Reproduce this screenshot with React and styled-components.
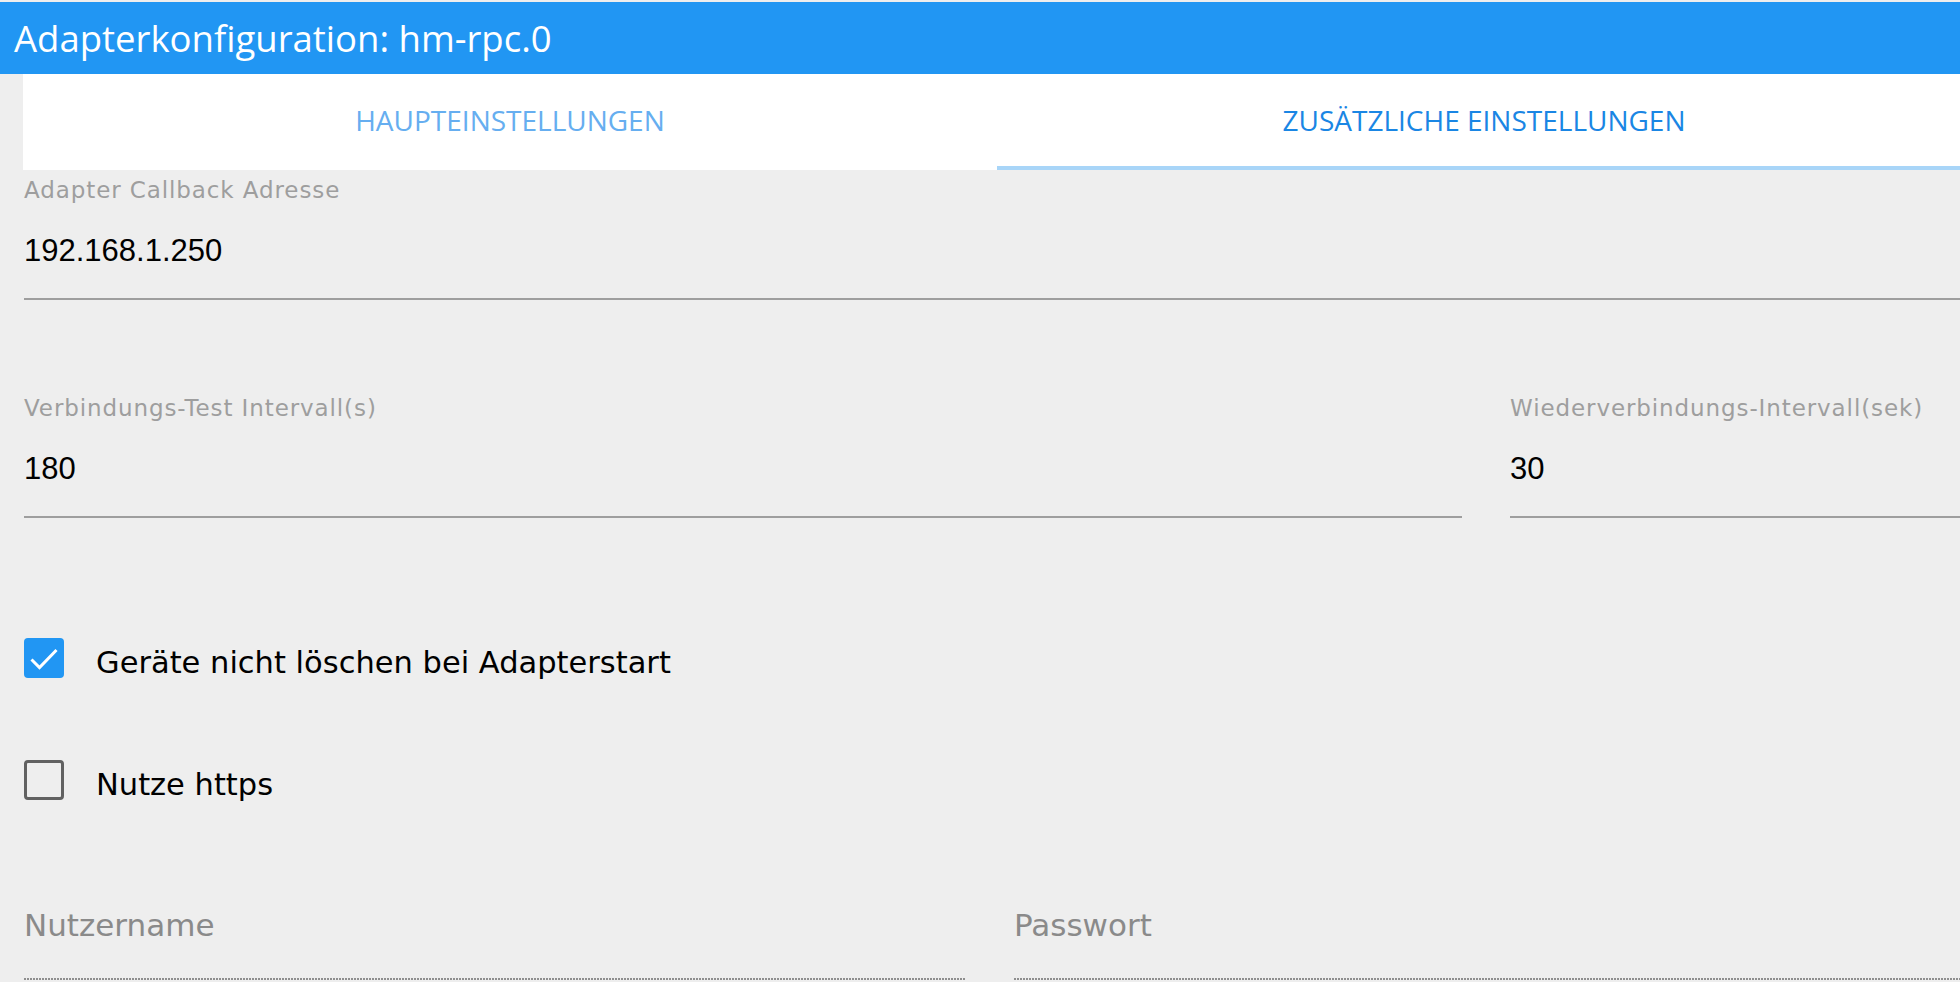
import React from 'react'
import styled, { createGlobalStyle } from 'styled-components'

const GlobalStyle = createGlobalStyle`
  html, body {
    margin: 0;
    padding: 0;
    background: #eeeeee;
    overflow: hidden;
  }
  body {
    font-family: 'DejaVu Sans', 'Noto Sans', sans-serif;
  }
`

const Page = styled.div`
  padding-top: 2px;
  min-height: 980px;
`

const Header = styled.header`
  height: 72px;
  background: #2196f3;
  display: flex;
  align-items: center;
  padding-left: 14px;
`

const Title = styled.h1`
  margin: 0;
  font-family: 'Open Sans', 'Noto Sans', sans-serif;
  font-weight: 400;
  font-size: 36.5px;
  line-height: 44px;
  color: #ffffff;
`

const Panel = styled.main`
  margin-left: 23px;
  width: 1948px;
`

const TabBar = styled.nav`
  display: grid;
  grid-template-columns: 974px 974px;
  background: #ffffff;
`

const Tab = styled.button`
  box-sizing: border-box;
  height: 96px;
  padding: 0;
  border: 0;
  border-bottom: 4px solid ${p => (p.$active ? '#a8d5f8' : 'transparent')};
  background: #ffffff;
  font-family: 'Open Sans', 'Noto Sans', sans-serif;
  font-size: 28px;
  line-height: 34px;
  text-transform: uppercase;
  text-align: center;
  color: ${p => (p.$active ? '#1a86e4' : '#66aef0')};
  cursor: pointer;
`

const Form = styled.form`
  padding: 7px 0 40px 1px;
`

const Row = styled.div`
  display: grid;
  grid-template-columns: ${p => p.$cols || '1fr'};
  column-gap: 48px;
  margin-top: ${p => p.$top || 0}px;
`

const Field = styled.label`
  display: block;
  min-width: 0;
`

const Label = styled.span`
  display: block;
  font-size: 23px;
  line-height: 26px;
  letter-spacing: 0.9px;
  color: #9e9e9e;
  margin-bottom: 30px;
  white-space: nowrap;
`

const Value = styled.div`
  font-family: 'Liberation Sans', Arial, sans-serif;
  font-size: 31px;
  line-height: 36px;
  color: #000000;
  padding-bottom: 29px;
  border-bottom: 2px solid #9e9e9e;
`

const EmptyField = styled.div`
  font-size: 31px;
  line-height: 36px;
  color: #8a8a8a;
  background-image: linear-gradient(to right, #8e8e8e 2px, transparent 2px);
  background-size: 3px 2px;
  background-repeat: repeat-x;
  background-position: left bottom;
  padding-bottom: 37px;
`

const CheckRow = styled.label`
  display: flex;
  align-items: flex-start;
  margin-top: ${p => p.$top || 0}px;
  cursor: pointer;
`

const Box = styled.span`
  box-sizing: border-box;
  flex: none;
  width: 40px;
  height: 40px;
  border-radius: 4px;
  background: ${p => (p.$checked ? '#2196f3' : 'transparent')};
  border: ${p => (p.$checked ? '0' : '3.3px solid #616161')};
  display: flex;
  align-items: center;
  justify-content: center;
`

const CheckText = styled.span`
  margin: 5px 0 0 32px;
  font-size: 30.5px;
  line-height: 40px;
  color: #000000;
  white-space: nowrap;
`

function Checkbox({ checked, top, children }) {
  return (
    <CheckRow $top={top}>
      <Box $checked={checked}>
        {checked && (
          <svg width="40" height="40" viewBox="0 0 40 40">
            <polyline
              points="7.5,21.5 15.5,29.5 32.5,12"
              fill="none"
              stroke="#ffffff"
              strokeWidth="3"
            />
          </svg>
        )}
      </Box>
      <CheckText>{children}</CheckText>
    </CheckRow>
  )
}

export default function App() {
  return (
    <Page>
      <GlobalStyle />
      <Header>
        <Title>Adapterkonfiguration: hm-rpc.0</Title>
      </Header>
      <Panel>
        <TabBar>
          <Tab type="button">Haupteinstellungen</Tab>
          <Tab type="button" $active>Zusätzliche Einstellungen</Tab>
        </TabBar>
        <Form>
          <Row>
            <Field>
              <Label>Adapter Callback Adresse</Label>
              <Value>192.168.1.250</Value>
            </Field>
          </Row>
          <Row $cols="1438px 1fr" $top={95}>
            <Field>
              <Label>Verbindungs-Test Intervall(s)</Label>
              <Value>180</Value>
            </Field>
            <Field>
              <Label>Wiederverbindungs-Intervall(sek)</Label>
              <Value>30</Value>
            </Field>
          </Row>
          <Checkbox checked top={120}>Geräte nicht löschen bei Adapterstart</Checkbox>
          <Checkbox top={77}>Nutze https</Checkbox>
          <Row $cols="942px 1fr" $top={102}>
            <EmptyField>Nutzername</EmptyField>
            <EmptyField>Passwort</EmptyField>
          </Row>
        </Form>
      </Panel>
    </Page>
  )
}
